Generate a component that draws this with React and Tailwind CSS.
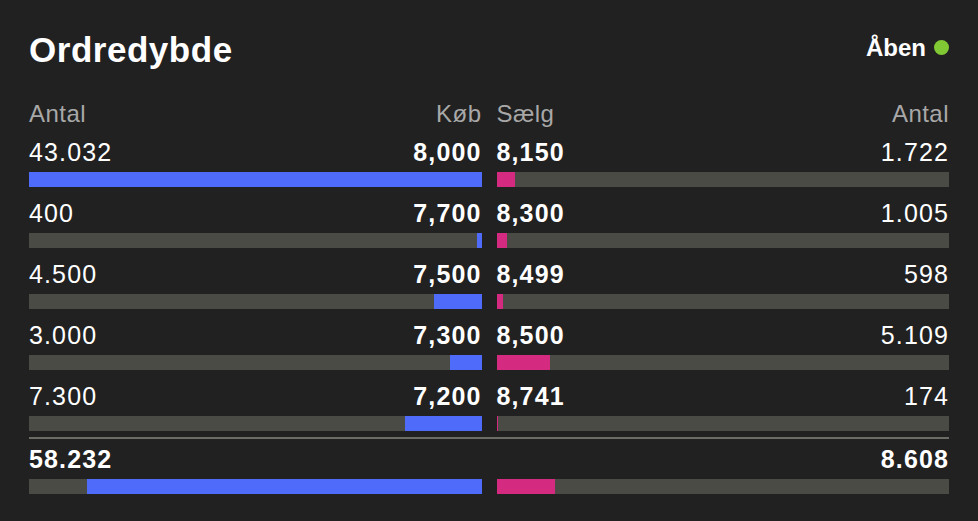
import React from "react";

const bids = [
  { qty: 43032, label: "43.032", price: "8,000" },
  { qty: 400, label: "400", price: "7,700" },
  { qty: 4500, label: "4.500", price: "7,500" },
  { qty: 3000, label: "3.000", price: "7,300" },
  { qty: 7300, label: "7.300", price: "7,200" },
];

const asks = [
  { qty: 1722, label: "1.722", price: "8,150" },
  { qty: 1005, label: "1.005", price: "8,300" },
  { qty: 598, label: "598", price: "8,499" },
  { qty: 5109, label: "5.109", price: "8,500" },
  { qty: 174, label: "174", price: "8,741" },
];

const maxQty = Math.max(...bids.map((b) => b.qty), ...asks.map((a) => a.qty));
const bidTotal = bids.reduce((s, b) => s + b.qty, 0);
const askTotal = asks.reduce((s, a) => s + a.qty, 0);

const Bar = ({ pct, side }) => (
  <div className={`flex h-[15px] bg-[#4b4b45] ${side === "buy" ? "justify-end" : "justify-start"}`}>
    <div
      className={side === "buy" ? "h-full bg-[#4f6bf9]" : "h-full bg-[#d42a7f]"}
      style={{ width: `${pct}%` }}
    />
  </div>
);

const App = () => {
  return (
    <div
      className="w-[978px] h-[521px] bg-[#212121] text-white px-[29px] pt-[32px] overflow-hidden"
      style={{ fontFamily: '"Liberation Sans", Arial, sans-serif' }}
    >
      {/* header */}
      <div className="flex items-center justify-between h-[35px]">
        <h1 className="text-[35px] leading-[35px] font-bold tracking-[0.015em]">Ordredybde</h1>
        <div className="flex items-center gap-[8px] -mt-[4px]">
          <span className="text-[24px] leading-[24px] font-bold">Åben</span>
          <span className="w-[15px] h-[15px] rounded-full bg-[#80c934]" />
        </div>
      </div>

      {/* order book */}
      <div className="grid grid-cols-2 gap-x-[15px] mt-[35px]">
        <div className="flex justify-between text-[24px] leading-[24px] tracking-[0.02em] text-[#a8a8a8]">
          <span>Antal</span>
          <span>Køb</span>
        </div>
        <div className="flex justify-between text-[24px] leading-[24px] tracking-[0.02em] text-[#a8a8a8]">
          <span>Sælg</span>
          <span>Antal</span>
        </div>
      </div>

      <div className="grid grid-cols-2 gap-x-[15px] mt-[14px]">
        <div className="flex flex-col">
          {bids.map((b) => (
            <div key={b.price} className="mb-[14px]">
              <div className="flex justify-between text-[25px] leading-[25px] tracking-[0.045em]">
                <span>{b.label}</span>
                <span className="font-bold">{b.price}</span>
              </div>
              <div className="mt-[7px]">
                <Bar pct={(b.qty / maxQty) * 100} side="buy" />
              </div>
            </div>
          ))}
        </div>
        <div className="flex flex-col">
          {asks.map((a) => (
            <div key={a.price} className="mb-[14px]">
              <div className="flex justify-between text-[25px] leading-[25px] tracking-[0.045em]">
                <span className="font-bold">{a.price}</span>
                <span>{a.label}</span>
              </div>
              <div className="mt-[7px]">
                <Bar pct={(a.qty / maxQty) * 100} side="sell" />
              </div>
            </div>
          ))}
        </div>
      </div>

      <div className="h-[2px] bg-[#6c6c66] -mt-[8px]" />

      {/* totals */}
      <div className="grid grid-cols-2 gap-x-[15px] mt-[8px]">
        <div>
          <div className="text-[25px] leading-[25px] tracking-[0.045em] font-bold">58.232</div>
          <div className="mt-[7px]">
            <Bar pct={(bidTotal / (bidTotal + askTotal)) * 100} side="buy" />
          </div>
        </div>
        <div>
          <div className="text-[25px] leading-[25px] tracking-[0.045em] font-bold text-right">8.608</div>
          <div className="mt-[7px]">
            <Bar pct={(askTotal / (bidTotal + askTotal)) * 100} side="sell" />
          </div>
        </div>
      </div>
    </div>
  );
};

export default App;
